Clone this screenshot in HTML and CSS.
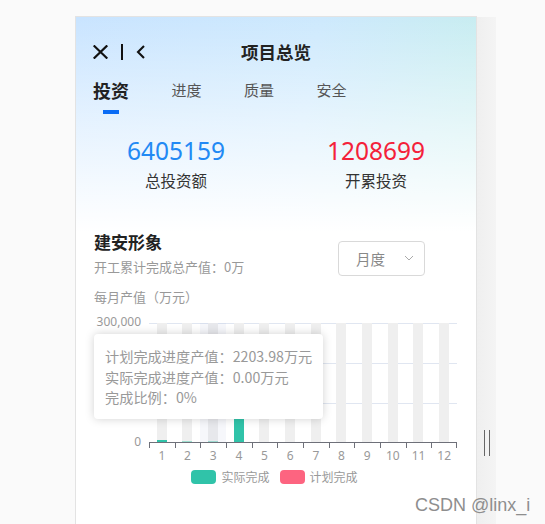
FILE: index.html
```html
<!DOCTYPE html>
<html lang="zh">
<head>
<meta charset="utf-8">
<title>项目总览</title>
<link rel="stylesheet" href="styles.css">
</head>
<body>
<div class="page">
  <div class="card">
    <div class="topbar">
      <div class="nav-icons">
        <svg class="ic-close" width="15" height="14" viewBox="0 0 15 14"><path d="M1.5 1.2 L13.5 12.8 M13.5 1.2 L1.5 12.8" stroke="#111" stroke-width="2.2" fill="none" stroke-linecap="square"/></svg>
        <span class="sep"></span>
        <svg class="ic-back" width="10" height="14" viewBox="0 0 10 14"><path d="M8 1 L2 7 L8 13" stroke="#111" stroke-width="2.1" fill="none"/></svg>
      </div>
      <div class="title">项目总览</div>
      <div></div>
    </div>

    <div class="tabs">
      <div class="tab active">投资<span class="bar"></span></div>
      <div class="tab">进度</div>
      <div class="tab">质量</div>
      <div class="tab">安全</div>
    </div>

    <div class="stats">
      <div class="stat">
        <div class="num blue">6405159</div>
        <div class="lbl">总投资额</div>
      </div>
      <div class="stat">
        <div class="num red">1208699</div>
        <div class="lbl">开累投资</div>
      </div>
    </div>

    <div class="section">
      <div class="section-info">
        <div class="section-title">建安形象</div>
        <div class="sub">开工累计完成总产值：0万</div>
        <div class="sub unit">每月产值（万元）</div>
      </div>
      <div class="select">
        <span>月度</span>
        <svg width="10" height="6" viewBox="0 0 10 6"><path d="M1 1 L5 5 L9 1" stroke="#aaa" stroke-width="1" fill="none"/></svg>
      </div>
    </div>

    <div class="chart">
      <div class="chart-main">
        <div class="yaxis">
          <span class="ylab y0">300,000</span>
          <span class="ylab y3">0</span>
        </div>
        <div class="plot">
          <div class="cat"><div class="bg"><div class="val" style="height:2px"></div></div></div>
          <div class="cat"><div class="bg"><div class="val faded" style="height:1.5px"></div></div></div>
          <div class="cat hover"><div class="bg"><div class="val faded" style="height:1.5px"></div></div></div>
          <div class="cat"><div class="bg"><div class="val" style="height:62px"></div></div></div>
          <div class="cat"><div class="bg"></div></div>
          <div class="cat"><div class="bg"></div></div>
          <div class="cat"><div class="bg"></div></div>
          <div class="cat"><div class="bg"></div></div>
          <div class="cat"><div class="bg"></div></div>
          <div class="cat"><div class="bg"></div></div>
          <div class="cat"><div class="bg"></div></div>
          <div class="cat"><div class="bg"></div></div>
        </div>
      </div>
      <div class="ticks">
        <span></span><span></span><span></span><span></span><span></span><span></span>
        <span></span><span></span><span></span><span></span><span></span><span></span>
      </div>
      <div class="xlabels">
        <span>1</span><span>2</span><span>3</span><span>4</span><span>5</span><span>6</span>
        <span>7</span><span>8</span><span>9</span><span>10</span><span>11</span><span>12</span>
      </div>
      <div class="legend">
        <div class="lg-item"><span class="sw teal"></span>实际完成</div>
        <div class="lg-item"><span class="sw pink"></span>计划完成</div>
      </div>

      <div class="tooltip">
        <div>计划完成进度产值：2203.98万元</div>
        <div>实际完成进度产值：0.00万元</div>
        <div>完成比例：0%</div>
      </div>
    </div>
  </div>
  <div class="strip">
    <span class="grip"></span>
  </div>
</div>
<div class="watermark">CSDN @linx_i</div>
</body>
</html>
```

FILE: styles.css
```css
* { box-sizing: border-box; }

html, body {
  margin: 0;
  padding: 0;
}

body {
  width: 545px;
  height: 524px;
  overflow: hidden;
  background: #fafafa;
  font-family: "Noto Sans CJK SC", "Noto Sans", sans-serif;
  color: #333;
  position: relative;
}

.page {
  display: flex;
  align-items: flex-start;
  padding: 16px 0 0 75px;
}

.card {
  width: 402px;
  min-height: 530px;
  border: 1px solid #e3e3e3;
  background:
    linear-gradient(to bottom, rgba(255,255,255,0) 0px, rgba(255,255,255,0.55) 110px, #ffffff 215px),
    linear-gradient(100deg, #c9e4ff 0%, #cde9fd 50%, #c5efea 100%);
}

.strip {
  width: 19px;
  height: 520px;
  margin-top: 1px;
  background: linear-gradient(to right, #efefef, #f4f4f4);
  display: flex;
  justify-content: center;
  padding-top: 413px;
}

.grip {
  width: 6px;
  height: 26px;
  border-left: 1.5px solid #666;
  border-right: 1.5px solid #666;
}

/* top bar */
.topbar {
  display: grid;
  grid-template-columns: 1fr auto 1fr;
  align-items: center;
  height: 34px;
  margin-top: 18px;
  padding: 0 17px;
}

.nav-icons {
  display: flex;
  align-items: center;
  gap: 13px;
}

.ic-close { display: block; }
.ic-back { display: block; }

.sep {
  width: 1.5px;
  height: 16px;
  background: #111;
}

.title {
  font-size: 17.5px;
  font-weight: 700;
  color: #222;
  line-height: 24px;
}

/* tabs */
.tabs {
  display: flex;
  gap: 42.5px;
  padding: 0 17px;
  margin-top: 9px;
  height: 36px;
}

.tab {
  font-size: 15px;
  line-height: 24px;
  color: #555;
  display: flex;
  flex-direction: column;
  align-items: center;
}

.tab.active {
  font-size: 18px;
  font-weight: 700;
  color: #222;
}

.tab .bar {
  width: 16px;
  height: 4.5px;
  margin-top: 8px;
  background: #0a6cf5;
}

/* stats */
.stats {
  display: grid;
  grid-template-columns: 1fr 1fr;
  margin-top: 23px;
}

.stat {
  display: flex;
  flex-direction: column;
  align-items: center;
}

.num {
  font-family: "Noto Sans", "Liberation Sans", sans-serif;
  font-size: 24.5px;
  line-height: 28px;
}

.num.blue { color: #2289f4; }
.num.red { color: #f4213a; }

.lbl {
  margin-top: 4px;
  font-size: 15.5px;
  line-height: 22px;
  color: #333;
}

/* section */
.section {
  display: flex;
  justify-content: space-between;
  align-items: flex-start;
  padding: 0 18px;
  margin-top: 39px;
}

.section-title {
  font-size: 17px;
  font-weight: 700;
  color: #222;
  line-height: 24px;
}

.sub {
  margin-top: 3px;
  font-size: 13px;
  line-height: 20px;
  color: #999;
}

.sub.unit {
  margin-top: 10px;
}

.select {
  margin-top: 11px;
  margin-right: 33px;
  width: 87px;
  height: 35px;
  border: 1px solid #d9d9d9;
  border-radius: 4px;
  display: flex;
  align-items: center;
  justify-content: space-between;
  padding: 0 10px 0 17px;
  font-size: 14.5px;
  color: #888;
}

.select svg { display: block; margin-top: -2px; }

/* chart */
.chart {
  position: relative;
  margin: 16px 19px 0 18px;
}

.chart-main {
  display: flex;
  height: 120px;
}

.yaxis {
  position: relative;
  width: 55px;
  flex: none;
}

.ylab {
  position: absolute;
  right: 8px;
  font-family: "Noto Sans", sans-serif;
  font-size: 12px;
  line-height: 14px;
  color: #999;
  transform: translateY(-50%);
}

.y0 { top: -1px; }
.y3 { top: 119px; }

.plot {
  flex: 1;
  display: grid;
  grid-template-columns: repeat(12, 1fr);
  border-bottom: 1px solid #6e7079;
  background:
    linear-gradient(#e0e6f1, #e0e6f1) 0 0 / 100% 1px no-repeat,
    linear-gradient(#e0e6f1, #e0e6f1) 0 40px / 100% 1px no-repeat,
    linear-gradient(#e0e6f1, #e0e6f1) 0 80px / 100% 1px no-repeat;
}

.cat {
  position: relative;
  display: flex;
  justify-content: center;
}

.cat.hover::after {
  content: "";
  position: absolute;
  inset: 0;
  background: rgba(150, 165, 215, 0.09);
}

.bg {
  width: 10px;
  height: 100%;
  background: #efefef;
  display: flex;
  flex-direction: column;
  justify-content: flex-end;
}

.val {
  width: 100%;
  background: #30c3a9;
}

.val.faded { background: #9fdfd0; }

.ticks {
  display: grid;
  grid-template-columns: repeat(12, 1fr);
  margin-left: 55px;
  height: 5px;
}

.ticks span { border-left: 1px solid #6e7079; }
.ticks span:last-child { border-right: 1px solid #6e7079; }

.xlabels {
  display: grid;
  grid-template-columns: repeat(12, 1fr);
  margin-left: 55px;
  font-family: "Noto Sans", sans-serif;
  font-size: 12px;
  line-height: 16px;
  color: #999;
  text-align: center;
}

.legend {
  display: flex;
  justify-content: center;
  gap: 10px;
  margin-top: 6px;
  margin-left: -2px;
}

.lg-item {
  display: flex;
  align-items: center;
  gap: 5px;
  font-size: 12px;
  line-height: 14px;
  color: #999;
}

.sw {
  width: 25px;
  height: 14px;
  border-radius: 4px;
}

.sw.teal { background: #30c3a9; }
.sw.pink { background: #fd6480; }

.tooltip {
  position: absolute;
  left: 0;
  top: 11px;
  width: 229px;
  height: 85px;
  background: #fff;
  border-radius: 4px;
  box-shadow: 0 0 10px rgba(0, 0, 0, 0.18);
  padding: 12px 8px 0 11px;
  font-size: 14.2px;
  line-height: 20.5px;
  color: #999;
  white-space: nowrap;
}

.watermark {
  position: absolute;
  left: 415px;
  top: 494px;
  font-family: "Liberation Sans", sans-serif;
  font-size: 18px;
  line-height: 22px;
  color: #8e8e8e;
}
```
